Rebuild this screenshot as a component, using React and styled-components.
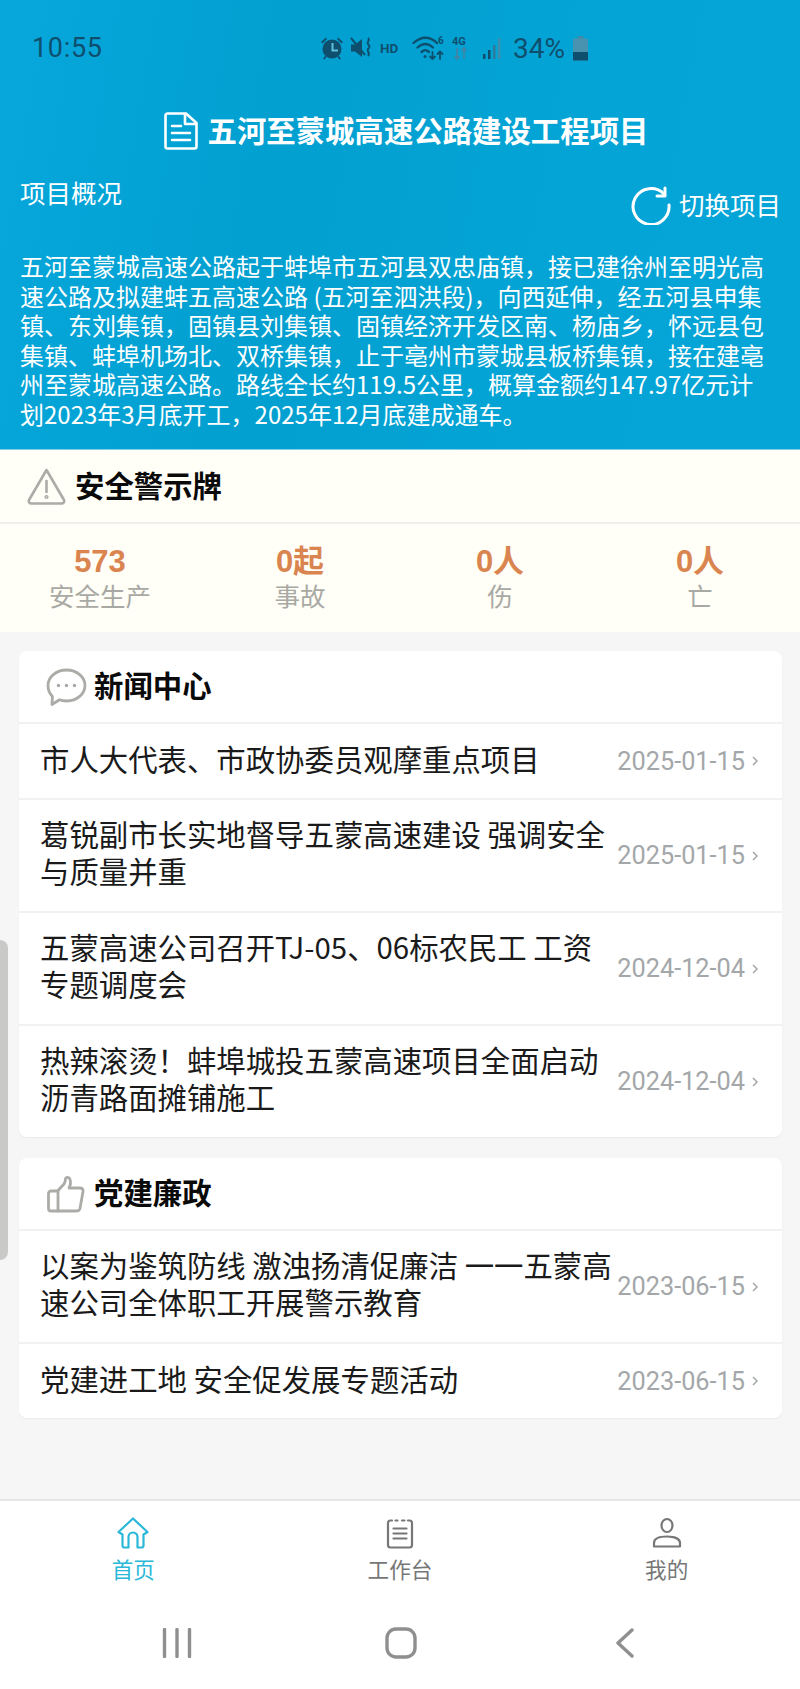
import React from "react";
import styled, { createGlobalStyle } from "styled-components";

const cjk = `"Noto Sans CJK SC", "Noto Sans", sans-serif`;
const latin = `Roboto, "Noto Sans CJK SC", sans-serif`;
const statusColor = "#0f4f6e";
const mutedIcon = "#ababa8";
const accent = "#2bb8d8";

const GlobalStyle = createGlobalStyle`
  html, body {
    margin: 0;
    padding: 0;
    background: #f6f6f6;
  }
  * {
    box-sizing: border-box;
  }
`;

const Page = styled.div`
  position: relative;
  width: 800px;
  height: 1689px;
  display: flex;
  flex-direction: column;
  overflow: hidden;
  background: #f6f6f6;
  font-family: ${cjk};
`;

const Header = styled.header`
  height: 450px;
  display: flex;
  flex-direction: column;
  flex: none;
  color: #fff;
  background: linear-gradient(100deg, #07a7dc 0%, #02a0d0 35%, #04a4d6 70%, #06a5d8 100%);
  border-bottom: 1px solid #7fd0ea;
`;

const StatusBar = styled.div`
  height: 96px;
  display: flex;
  align-items: center;
  padding-left: 32px;
  color: ${statusColor};
  flex: none;
`;

const Clock = styled.span`
  width: 288px;
  font: 400 27px ${latin};
  letter-spacing: 0.7px;
`;

const Glyph = styled.span`
  display: flex;
  align-items: center;
  margin-left: ${(p) => p.$gap || 0}px;
`;

const Hd = styled.span`
  width: 20px;
  margin-left: 6px;
  font: 700 13.5px ${latin};
  white-space: nowrap;
`;

const BatteryLevel = styled.span`
  margin-left: 10px;
  font: 400 28px ${latin};
`;

const TitleRow = styled.div`
  height: 70px;
  flex: none;
  display: flex;
  align-items: center;
  justify-content: center;
  gap: 10px;
  padding-left: 12px;
  padding-bottom: 1px;
`;

const Title = styled.h1`
  margin: 0;
  padding-bottom: 3px;
  font-size: 29.4px;
  font-weight: 700;
  line-height: 40px;
  white-space: nowrap;
`;

const OverviewRow = styled.div`
  height: 85px;
  flex: none;
  display: flex;
  justify-content: space-between;
  padding: 0 19px 0 20px;
`;

const OverviewLabel = styled.span`
  font-size: 25.5px;
  line-height: 52px;
`;

const SwitchButton = styled.div`
  height: 78px;
  display: flex;
  align-items: center;
  gap: 8px;
`;

const SwitchLabel = styled.span`
  padding-bottom: 3px;
  font-size: 25.5px;
`;

const Summary = styled.p`
  margin: 0;
  padding-left: 20px;
  font-size: 24px;
  line-height: 29.6px;
  white-space: nowrap;
`;

const SummaryLine = styled.span`
  display: block;
`;

const WarningBoard = styled.section`
  flex: none;
  background: #fffef7;
`;

const WarningHead = styled.div`
  height: 74px;
  display: flex;
  align-items: center;
  gap: 9px;
  padding-left: 27px;
  border-bottom: 2px solid #f0efe9;
`;

const SectionName = styled.h2`
  margin: 0;
  padding-bottom: 5px;
  font-size: 29.4px;
  font-weight: 700;
  line-height: 40px;
  color: #0a0a0a;
`;

const Stats = styled.div`
  height: 108px;
  display: grid;
  grid-template-columns: repeat(4, 1fr);
  padding-top: 22px;
`;

const Stat = styled.div`
  display: flex;
  flex-direction: column;
  align-items: center;
`;

const StatValue = styled.strong`
  font-family: "Liberation Sans", ${cjk};
  font-size: 31px;
  font-weight: 700;
  line-height: 32px;
  color: #da8550;
`;

const StatLabel = styled.span`
  font-size: 25.5px;
  line-height: 34px;
  color: #a9a9a4;
`;

const Main = styled.main`
  flex: 1;
  display: flex;
  flex-direction: column;
  gap: 21px;
  padding: 19px 18px 0 19px;
`;

const Card = styled.section`
  background: #fff;
  border-radius: 8px;
  box-shadow: 0 1px 2px rgba(0, 0, 0, 0.05);
`;

const CardHead = styled.div`
  height: 71px;
  display: flex;
  align-items: center;
  gap: 7px;
  padding-left: 27px;
`;

const Row = styled.div`
  display: flex;
  align-items: center;
  justify-content: space-between;
  min-height: ${(p) => (p.$tall ? "113px" : "76px")};
  padding: 0 23px 0 21px;
  border-top: 2px solid #f1f1f1;
`;

const RowTitle = styled.div`
  width: 575px;
  padding-bottom: ${(p) => (p.$tall ? "8px" : "6px")};
  font-size: 29.4px;
  line-height: 36.6px;
  color: #1a1a1a;
`;

const RowDate = styled.div`
  display: flex;
  align-items: center;
  gap: 6px;
  font: 400 25.3px ${latin};
  color: #a4a7a9;
  white-space: nowrap;
`;

const TabBar = styled.nav`
  flex: none;
  height: 107px;
  display: grid;
  grid-template-columns: repeat(3, 1fr);
  background: #fff;
  border-top: 2px solid #e6e6e6;
`;

const Tab = styled.div`
  display: flex;
  flex-direction: column;
  align-items: center;
  padding-top: 16px;
  gap: 5px;
  font-size: 21.6px;
  line-height: 30px;
  color: ${(p) => (p.$active ? accent : "#777")};
`;

const SystemBar = styled.div`
  flex: none;
  height: 83px;
  background: #fff;
  display: grid;
  grid-template-columns: repeat(3, 224px);
  padding: 0 64px 9px 65px;
  align-items: center;
  justify-items: center;
`;

const SideHandle = styled.div`
  position: absolute;
  left: 0;
  top: 940px;
  width: 8px;
  height: 320px;
  background: #c9c9c7;
  border-radius: 0 8px 8px 0;
`;

const DocIcon = () => (
  <svg width="34" height="38" viewBox="0 0 34 38" fill="none" stroke="#fff" strokeWidth="2.6" strokeLinejoin="round" strokeLinecap="round">
    <path d="M3.5 1.5H22L32.5 11V34.5a2 2 0 0 1-2 2H3.5a2 2 0 0 1-2-2V3.5a2 2 0 0 1 2-2Z" />
    <path d="M21 2V12H32" />
    <path d="M8 14H17M8 21H26M8 28H26" />
  </svg>
);

const RefreshIcon = () => (
  <svg width="40" height="40" viewBox="0 0 40 40" fill="none" stroke="#fff" strokeWidth="3" strokeLinecap="round" strokeLinejoin="round">
    <path d="M33 9A18 18 0 1 0 38 20" />
    <path d="M34 3V11H26" />
  </svg>
);

const WarningIcon = () => (
  <svg width="39" height="37" viewBox="0 0 39 37" fill="none" stroke={mutedIcon} strokeWidth="2.6" strokeLinejoin="round" strokeLinecap="round">
    <path d="M19.5 2L37 32a2.5 2.5 0 0 1-2 3.5H4A2.5 2.5 0 0 1 2 32Z" />
    <path d="M19.5 13V24" />
    <circle cx="19.5" cy="29" r="0.8" />
  </svg>
);

const ChatIcon = () => (
  <svg width="41" height="38" viewBox="0 0 41 38" fill="none" stroke={mutedIcon} strokeWidth="2.8" strokeLinejoin="round">
    <path d="M20.5 2C31 2 39 9 39 17.5S31 33 20.5 33c-2.5 0-5-.4-7-1.2L6 36.5l.4-8C3.5 25.5 2 21.7 2 17.5 2 9 10 2 20.5 2Z" />
    <g fill={mutedIcon} stroke="none">
      <circle cx="12.5" cy="17.5" r="1.8" />
      <circle cx="20.5" cy="17.5" r="1.8" />
      <circle cx="28.5" cy="17.5" r="1.8" />
    </g>
  </svg>
);

const ThumbIcon = () => (
  <svg width="41" height="38" viewBox="0 0 41 38" fill="none" stroke={mutedIcon} strokeWidth="2.8" strokeLinejoin="round" strokeLinecap="round">
    <path d="M12 15.5 18 9c1-1.5 1.5-3 1.5-5 0-2 3.500-2.500 4.500.5 1 2.500.5 5.500-1 8.500H34c2 0 3.500 1.500 3 3.500l-3 17c-.4 1.500-1.400 2.500-3 2.500H12Z" />
    <path d="M12 16H5c-1.500 0-2.500 1-2.500 2.500v15c0 1.500 1 2.500 2.500 2.500h7" />
  </svg>
);

const HomeIcon = () => (
  <svg width="32" height="32" viewBox="0 0 32 32" fill="none" stroke={accent} strokeWidth="2.2" strokeLinejoin="round">
    <path d="M16 1.5 30.500 15 26.500 17.500V28.500a2 2 0 0 1-2 2H20.500V20a4.500 4.500 0 0 0-9 0v10.500H7.500a2 2 0 0 1-2-2V17.500L1.500 15Z" />
  </svg>
);

const ClipboardIcon = () => (
  <svg width="32" height="32" viewBox="0 0 32 32" fill="none" stroke="#777" strokeWidth="2.2" strokeLinecap="round">
    <path d="M8 3.500H6.500A2.500 2.500 0 0 0 4 6v22a2.500 2.500 0 0 0 2.500 2.500h19A2.500 2.500 0 0 0 28 28V6a2.500 2.500 0 0 0-2.500-2.500H24" />
    <path d="M11.500 3.500h2M18 3.500h2.500" />
    <path d="M9.500 11.500h13M9.500 16.500h13M9.500 21.500h13" />
  </svg>
);

const PersonIcon = () => (
  <svg width="32" height="32" viewBox="0 0 32 32" fill="none" stroke="#777" strokeWidth="2.2" strokeLinejoin="round">
    <ellipse cx="16" cy="8.500" rx="5.500" ry="6.500" />
    <path d="M3 29.500V26c0-4 5-6.500 13-6.500S29 22 29 26v3.500Z" />
  </svg>
);

const AlarmGlyph = () => (
  <svg width="24" height="24" viewBox="0 0 24 24" fill={statusColor} stroke="none">
    <circle cx="12" cy="13" r="9.500" />
    <path d="M1 6 6 1.500 7 3 2.500 7.500ZM23 6 18 1.500 17 3 21.500 7.500ZM5 20l-2 3 1.500.5 2.500-3ZM19 20l2 3-1.500.5-2.500-3Z" />
    <path d="M11.500 7h2v6.500H18v2h-6.500Z" fill="#5fc0de" />
  </svg>
);

const MuteGlyph = () => (
  <svg width="24" height="24" viewBox="0 0 24 24" fill="none" stroke={statusColor}>
    <path d="M1 8.500H5L12 3V21L5 15.500H1Z" fill={statusColor} stroke="none" />
    <path d="M1 2 15 19" strokeWidth="2" />
    <path d="M18 2c3 2-2 4 0 6s2 3 0 5 3 4 0 7" strokeWidth="2" />
  </svg>
);

const WifiGlyph = () => (
  <svg width="33" height="26" viewBox="0 0 33 26" fill="none" stroke={statusColor} strokeWidth="2.3" strokeLinecap="round">
    <path d="M1.500 8C9 1 18 1 25 8" />
    <path d="M5.500 12.500c5-4.500 10.500-4.500 15.500 0" />
    <path d="M9.500 17c3-2.500 4.500-2.500 7.500 0" />
    <circle cx="13" cy="21.500" r="1.500" fill={statusColor} stroke="none" />
    <path d="M20.500 17V24M18 21.500l2.500 2.500 2.500-2.500M28 24V16.500M25.500 19l2.500-2.500 2.500 2.500" strokeWidth="1.8" />
    <text x="26" y="9" fontSize="10" fontWeight="700" fill={statusColor} stroke="none" fontFamily="Roboto, sans-serif">6</text>
  </svg>
);

const NetGlyph = () => (
  <svg width="18" height="26" viewBox="0 0 18 26" fill="none" stroke="#3d86a6" strokeWidth="1.8">
    <text x="0" y="10" fontSize="11" fontWeight="700" fill={statusColor} stroke="none" fontFamily="Roboto, sans-serif">4G</text>
    <path d="M5 13V24M2.500 21l2.500 3 2.500-3M12 24V13M9.500 16l2.500-3 2.500 3" />
  </svg>
);

const SignalGlyph = () => (
  <svg width="21" height="24" viewBox="0 0 21 24" fill="none">
    <rect x="1" y="18" width="2.500" height="5" fill={statusColor} />
    <rect x="6" y="14" width="2.500" height="9" fill={statusColor} />
    <rect x="11" y="9" width="2.500" height="14" fill="#2d7c9e" />
    <rect x="16" y="2" width="2.500" height="21" fill="#3f8eae" />
  </svg>
);

const BatteryGlyph = () => (
  <svg width="15" height="25" viewBox="0 0 15 25">
    <rect x="4.500" y="0" width="6" height="3" fill="#3f8aa8" />
    <rect x="0" y="2.500" width="15" height="22" rx="1" fill="#4a93b0" />
    <rect x="0" y="16" width="15" height="8.500" fill={statusColor} />
  </svg>
);

const Chevron = () => (
  <svg width="8" height="14" viewBox="0 0 8 14" fill="none" stroke="#a4a7a9" strokeWidth="1.5">
    <path d="M2 3l4 4-4 4" />
  </svg>
);

const RecentsKey = () => (
  <svg width="30" height="30" viewBox="0 0 30 30" fill="none" stroke="#8f8f8f" strokeWidth="3.4" strokeLinecap="round">
    <path d="M2.500 1.500V28.500M15 1.500V28.500M27.500 1.500V28.500" />
  </svg>
);

const HomeKey = () => (
  <svg width="32" height="32" viewBox="0 0 32 32" fill="none" stroke="#8f8f8f" strokeWidth="3.4">
    <rect x="2" y="2" width="28" height="28" rx="9" />
  </svg>
);

const BackKey = () => (
  <svg width="20" height="30" viewBox="0 0 20 30" fill="none" stroke="#8f8f8f" strokeWidth="3.4" strokeLinecap="round" strokeLinejoin="round">
    <path d="M17 2 3 15 17 28" />
  </svg>
);

// full-width comma and exclamation mark, as the reference has them
const summary = [
  "五河至蒙城高速公路起于蚌埠市五河县双忠庙镇\uFF0C接已建徐州至明光高",
  "速公路及拟建蚌五高速公路 (五河至泗洪段)\uFF0C向西延伸\uFF0C经五河县申集",
  "镇、东刘集镇\uFF0C固镇县刘集镇、固镇经济开发区南、杨庙乡\uFF0C怀远县包",
  "集镇、蚌埠机场北、双桥集镇\uFF0C止于亳州市蒙城县板桥集镇\uFF0C接在建亳",
  "州至蒙城高速公路。路线全长约119.5公里\uFF0C概算金额约147.97亿元计",
  "划2023年3月底开工\uFF0C2025年12月底建成通车。",
];

const stats = [
  { value: "573", label: "安全生产" },
  { value: "0起", label: "事故" },
  { value: "0人", label: "伤" },
  { value: "0人", label: "亡" },
];

const news = [
  { title: "市人大代表、市政协委员观摩重点项目", date: "2025-01-15" },
  { title: "葛锐副市长实地督导五蒙高速建设 强调安全与质量并重", date: "2025-01-15", tall: true },
  { title: "五蒙高速公司召开TJ-05、06标农民工 工资专题调度会", date: "2024-12-04", tall: true },
  { title: "热辣滚烫\uFF01蚌埠城投五蒙高速项目全面启动沥青路面摊铺施工", date: "2024-12-04", tall: true },
];

const party = [
  { title: "以案为鉴筑防线 激浊扬清促廉洁 一一五蒙高速公司全体职工开展警示教育", date: "2023-06-15", tall: true },
  { title: "党建进工地 安全促发展专题活动", date: "2023-06-15" },
];

const ListRows = ({ items }) =>
  items.map((item) => (
    <Row key={item.title} $tall={item.tall}>
      <RowTitle $tall={item.tall}>{item.title}</RowTitle>
      <RowDate>
        {item.date}
        <Chevron />
      </RowDate>
    </Row>
  ));

export default function App() {
  return (
    <Page>
      <GlobalStyle />
      <Header>
        <StatusBar>
          <Clock>10:55</Clock>
          <Glyph><AlarmGlyph /></Glyph>
          <Glyph $gap={6}><MuteGlyph /></Glyph>
          <Hd>HD</Hd>
          <Glyph $gap={12}><WifiGlyph /></Glyph>
          <Glyph $gap={7}><NetGlyph /></Glyph>
          <Glyph $gap={12}><SignalGlyph /></Glyph>
          <BatteryLevel>34%</BatteryLevel>
          <Glyph $gap={8}><BatteryGlyph /></Glyph>
        </StatusBar>
        <TitleRow>
          <DocIcon />
          <Title>五河至蒙城高速公路建设工程项目</Title>
        </TitleRow>
        <OverviewRow>
          <OverviewLabel>项目概况</OverviewLabel>
          <SwitchButton>
            <RefreshIcon />
            <SwitchLabel>切换项目</SwitchLabel>
          </SwitchButton>
        </OverviewRow>
        <Summary>
          {summary.map((line) => (
            <SummaryLine key={line}>{line}</SummaryLine>
          ))}
        </Summary>
      </Header>

      <WarningBoard>
        <WarningHead>
          <WarningIcon />
          <SectionName>安全警示牌</SectionName>
        </WarningHead>
        <Stats>
          {stats.map((s) => (
            <Stat key={s.label}>
              <StatValue>{s.value}</StatValue>
              <StatLabel>{s.label}</StatLabel>
            </Stat>
          ))}
        </Stats>
      </WarningBoard>

      <Main>
        <Card>
          <CardHead>
            <ChatIcon />
            <SectionName>新闻中心</SectionName>
          </CardHead>
          <ListRows items={news} />
        </Card>
        <Card>
          <CardHead>
            <ThumbIcon />
            <SectionName>党建廉政</SectionName>
          </CardHead>
          <ListRows items={party} />
        </Card>
      </Main>

      <TabBar>
        <Tab $active>
          <HomeIcon />
          首页
        </Tab>
        <Tab>
          <ClipboardIcon />
          工作台
        </Tab>
        <Tab>
          <PersonIcon />
          我的
        </Tab>
      </TabBar>
      <SystemBar>
        <RecentsKey />
        <HomeKey />
        <BackKey />
      </SystemBar>
      <SideHandle />
    </Page>
  );
}
